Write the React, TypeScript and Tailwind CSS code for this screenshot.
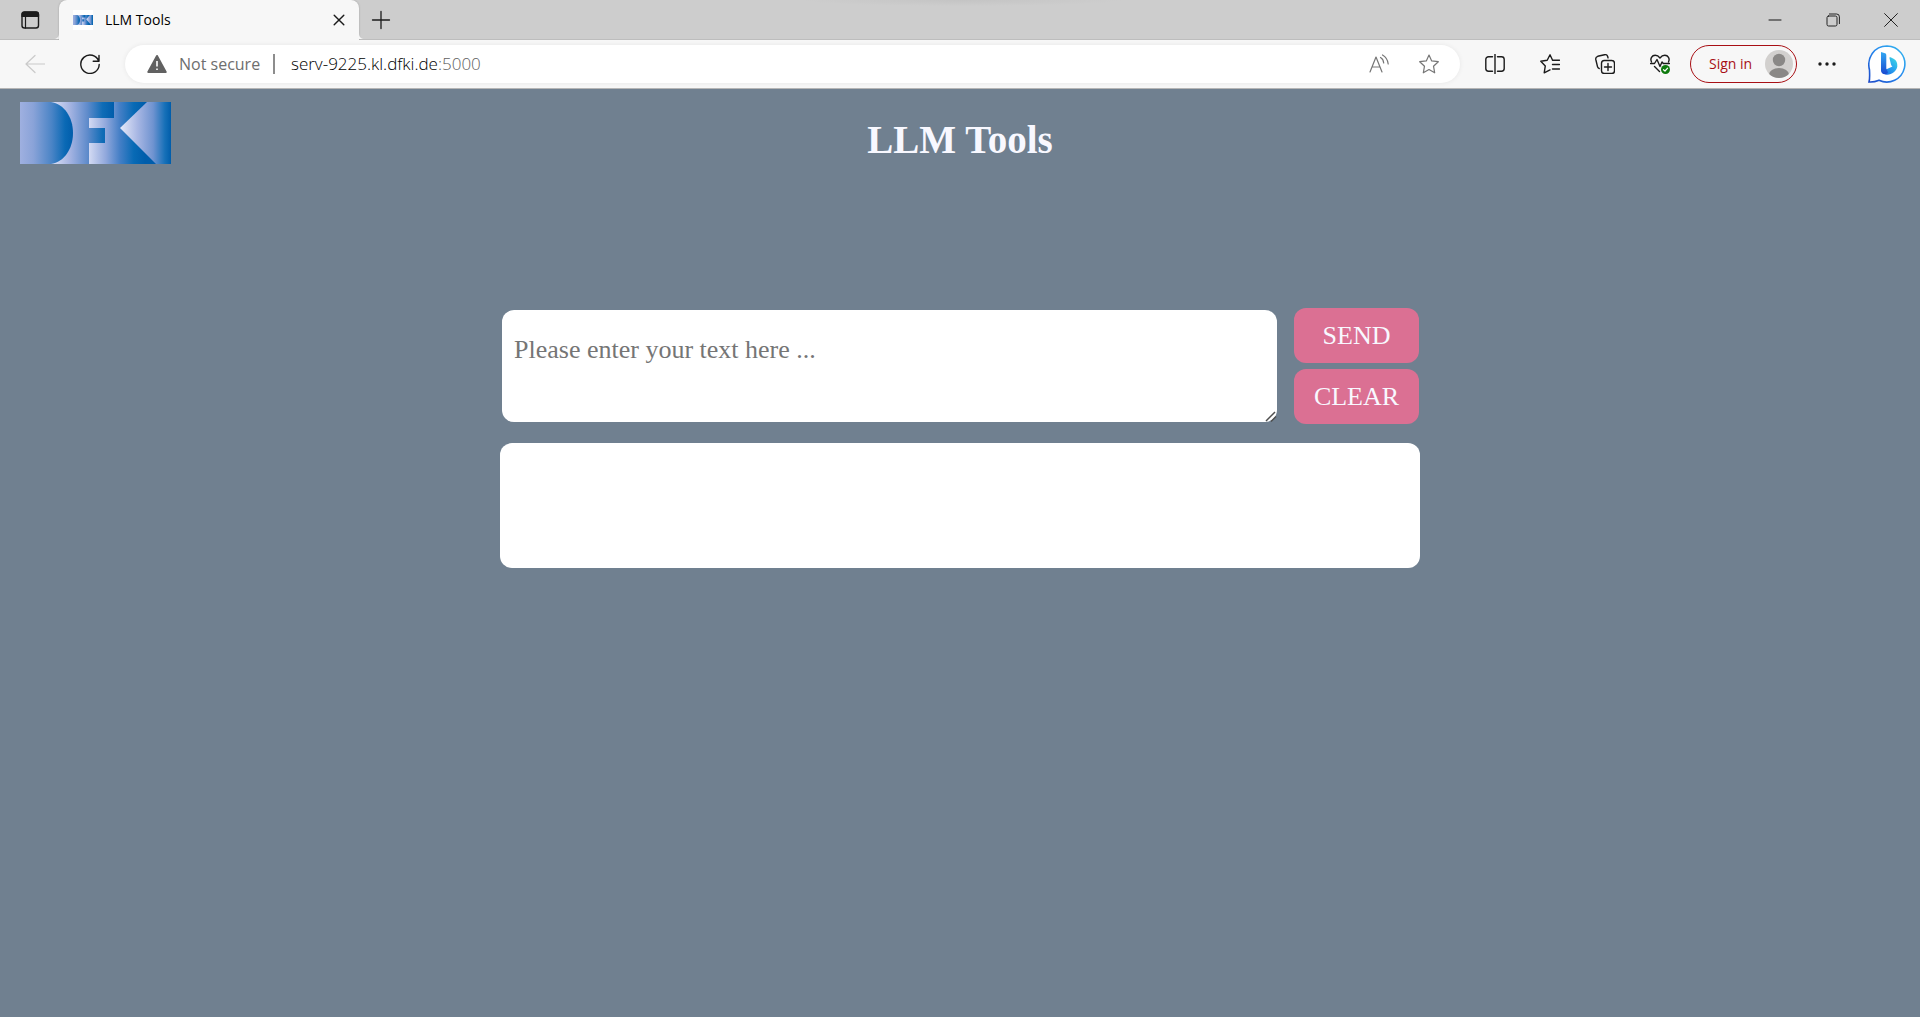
import { useState } from "react";
import type { ReactNode } from "react";

const uiFont = "font-['Open_Sans','Noto_Sans',sans-serif]";
const pageFont = "font-['Liberation_Serif',serif]";

function DfkiLogo({ className, id }: { className: string; id: string }) {
  return (
    <svg viewBox="0 0 151 62" preserveAspectRatio="none" className={className} role="img" aria-label="DFKI">
      <defs>
        <linearGradient id={id + "d"} gradientUnits="userSpaceOnUse" x1="0" y1="0" x2="53" y2="0">
          <stop offset="0" stopColor="#9fb0e0" />
          <stop offset="0.25" stopColor="#8aa3d8" />
          <stop offset="0.6" stopColor="#4a84c6" />
          <stop offset="0.85" stopColor="#0a69b5" />
          <stop offset="1" stopColor="#005dab" />
        </linearGradient>
        <linearGradient id={id + "f"} gradientUnits="userSpaceOnUse" x1="31" y1="0" x2="94" y2="0">
          <stop offset="0" stopColor="#dfe3f6" />
          <stop offset="0.3" stopColor="#a5b4e2" />
          <stop offset="0.58" stopColor="#5f8bcb" />
          <stop offset="0.82" stopColor="#0f6cb6" />
          <stop offset="1" stopColor="#005dab" />
        </linearGradient>
        <linearGradient id={id + "k"} gradientUnits="userSpaceOnUse" x1="69" y1="0" x2="125" y2="0">
          <stop offset="0" stopColor="#d3daf3" />
          <stop offset="0.3" stopColor="#91a8dc" />
          <stop offset="0.55" stopColor="#457fc6" />
          <stop offset="0.8" stopColor="#086ab5" />
          <stop offset="1" stopColor="#005dab" />
        </linearGradient>
        <linearGradient id={id + "t"} gradientUnits="userSpaceOnUse" x1="100" y1="0" x2="151" y2="0">
          <stop offset="0" stopColor="#e6eaf9" />
          <stop offset="0.35" stopColor="#a7b6e3" />
          <stop offset="0.65" stopColor="#6f93d0" />
          <stop offset="0.88" stopColor="#1670b8" />
          <stop offset="1" stopColor="#005dab" />
        </linearGradient>
      </defs>
      <path d="M69 0H151V62H69Z" fill={`url(#${id}k)`} />
      <path d="M30 0H94V16H69V26H85V41H69V62H30Z" fill={`url(#${id}f)`} />
      <path d="M0 0H31C44 2 53 15 53 31S44 60 31 62H0Z" fill={`url(#${id}d)`} />
      <path d="M127 0H151V62H136L100 26Z" fill={`url(#${id}t)`} />
    </svg>
  );
}

function Icon({ size = "size-5", children, color = "text-[#1b1b1b]" }: { size?: string; color?: string; children: ReactNode }) {
  return (
    <svg
      viewBox="0 0 20 20"
      className={`${size} ${color} shrink-0`}
      fill="none"
      stroke="currentColor"
      strokeWidth="1.2"
      strokeLinecap="round"
      strokeLinejoin="round"
      aria-hidden="true"
    >
      {children}
    </svg>
  );
}

function ToolButton({ label, children, disabled }: { label: string; children: ReactNode; disabled?: boolean }) {
  return (
    <button type="button" aria-label={label} disabled={disabled} className="flex h-full w-[55px] shrink-0 items-center justify-center">
      {children}
    </button>
  );
}

function TabCorner({ flip }: { flip?: boolean }) {
  return (
    <svg viewBox="0 0 6 6" className={`size-1.5 self-end ${flip ? "-scale-x-100" : ""}`} aria-hidden="true">
      <path d="M6 0V6H0C4 6 6 4 6 0Z" fill="#f7f7f7" />
    </svg>
  );
}

function TabStrip() {
  return (
    <div className="flex h-10 items-stretch border-b border-[#bdbdbd] bg-[#cdcdcd]">
      <button type="button" aria-label="Tab actions" className="ml-[7px] mr-px flex w-[45px] items-center justify-center">
        <Icon>
          <rect x="2" y="2" width="16.5" height="16" rx="2.5" strokeWidth="1.4" />
          <path d="M2 6.5V4.5A2.5 2.5 0 0 1 4.500 2H16a2.500 2.500 0 0 1 2.500 2.500V6.500Z" fill="currentColor" />
          <path d="M5.500 6.500V18" />
        </Icon>
      </button>
      <TabCorner />
      <div className="-mb-px flex w-[300px] items-center rounded-t-lg bg-[#f7f7f7] pl-3.5 pr-2 shadow-[0_0_2px_rgba(0,0,0,0.25)] [clip-path:inset(0_-2px_0_-2px)]">
        <span className="flex size-5 items-center bg-white">
          <DfkiLogo id="fav" className="h-2.5 w-5" />
        </span>
        <span className="ml-3 flex-1 text-sm text-black">LLM Tools</span>
        <button type="button" aria-label="Close tab" className="flex size-6 items-center justify-center">
          <Icon size="size-4">
            <path d="M4 4L16 16M16 4L4 16" strokeWidth="1.800" />
          </Icon>
        </button>
      </div>
      <TabCorner flip />
      <button type="button" aria-label="New tab" className="flex w-8 items-center justify-center">
        <Icon>
          <path d="M10 1.500V18.500M1.500 10H18.500" strokeWidth="1.300" />
        </Icon>
      </button>
      <div className="flex-1 bg-[radial-gradient(ellipse_160px_6px_at_565px_0px,#c4c4c4,#cdcdcd)]" />
      <button type="button" aria-label="Minimize" className="flex w-[58px] items-center justify-center">
        <Icon size="size-4">
          <path d="M2 10H18" strokeWidth="1.300" strokeLinecap="butt" />
        </Icon>
      </button>
      <button type="button" aria-label="Restore" className="flex w-[58px] items-center justify-center">
        <Icon size="size-4">
          <rect x="2.500" y="5" width="12.500" height="12.500" rx="2" />
          <path d="M5.500 2.500H14.500A3.500 3.500 0 0 1 18 6V14.500" />
        </Icon>
      </button>
      <button type="button" aria-label="Close window" className="flex w-[58px] items-center justify-center">
        <Icon size="size-4">
          <path d="M2 2L18 18M18 2L2 18" />
        </Icon>
      </button>
    </div>
  );
}

function Toolbar() {
  return (
    <div className="flex h-[49px] items-center border-b border-[#b5b5b5] bg-[#f7f7f7] pl-[7px] pr-[3px]">
      <ToolButton label="Back" disabled>
        <Icon color="text-[#cacaca]">
          <path d="M10 1.500L1 10L10 18.500M1 10H19.500" />
        </Icon>
      </ToolButton>
      <ToolButton label="Refresh">
        <Icon>
          <path d="M18.700 7.200A9.200 9.200 0 1 0 19.200 10.500M19 1.500V7.200H13.200" strokeWidth="1.400" />
        </Icon>
      </ToolButton>

      <div className="ml-2 flex h-[38px] min-w-0 flex-1 items-center rounded-full bg-white pl-[22px] pr-[21px] shadow-[0_0_5px_rgba(0,0,0,0.07)]">
        <svg viewBox="0 0 20 20" className="size-5 shrink-0" aria-hidden="true">
          <path d="M10 2L18.700 18H1.300Z" fill="#616161" stroke="#616161" strokeWidth="2" strokeLinejoin="round" />
          <path d="M10 7V12.500M10 14.500V16" stroke="#fff" strokeWidth="1.600" />
        </svg>
        <span className="ml-3 w-[82px] shrink-0 whitespace-nowrap text-base text-[#6e6e6e]">Not secure</span>
        <span className="ml-3 h-5 w-0.5 shrink-0 bg-[#8d8d8d]" />
        <a href="#" className="ml-4 min-w-0 flex-1 truncate text-[17px] font-light text-black">
          serv-9225.kl.dfki.de<span className="text-[#606060]">:5000</span>
        </a>
        <div className="flex gap-[30px]">
          <button type="button" aria-label="Read aloud">
            <Icon color="text-[#767676]">
              <path d="M1 18L7 3L13 18M3.200 13H10.800" />
              <path d="M11.500 3.500C13.500 4.500 14.500 6.500 14.700 9M13.500 1C17 3 18.800 6 19.200 10" />
            </Icon>
          </button>
          <button type="button" aria-label="Add to favorites">
            <Icon color="text-[#767676]">
              <path d="M10 1L12.700 6.900L19.300 7.700L14.500 12.200L15.700 18.800L10 15.600L4.300 18.800L5.500 12.200L0.700 7.700L7.300 6.900Z" />
            </Icon>
          </button>
        </div>
      </div>

      <div className="ml-[7px] flex h-full">
        <ToolButton label="Split screen">
          <Icon>
            <path d="M7.500 2.800H3.500A2.700 2.700 0 0 0 0.800 5.500V14.500A2.700 2.700 0 0 0 3.500 17.200H7.500M12.500 2.800H16.500A2.700 2.700 0 0 1 19.200 5.500V14.500A2.700 2.700 0 0 1 16.500 17.200H12.500" strokeWidth="1.400" />
            <path d="M10 0.500V19.500" strokeWidth="1.400" />
          </Icon>
        </ToolButton>
        <ToolButton label="Favorites">
          <Icon>
            <path d="M14 6.200H12.600L10 0.800L7.200 6.300L0.800 7.200L5.300 11.900L4.200 18.800L10 15.900M12.500 6.200H19.500M12.500 10.500H19.500M12.500 15H19.500" strokeWidth="1.400" />
          </Icon>
        </ToolButton>
        <ToolButton label="Collections">
          <Icon>
            <rect x="6.500" y="6.500" width="13" height="13" rx="2.800" strokeWidth="1.400" />
            <path d="M13 9.500V16.500M9.500 13H16.500" strokeWidth="1.400" />
            <path d="M4.200 14.500C3.200 14.300 2.700 13.700 2.500 12.700L0.800 5.500C0.500 4 1.200 2.800 2.700 2.300L9.500 0.700C11 0.400 12.200 1 12.700 2.500L13 3.800" strokeWidth="1.400" />
          </Icon>
        </ToolButton>
        <ToolButton label="Browser essentials">
          <Icon>
            <path d="M1.500 8C-0.200 4.500 2 1.300 5.200 1.300C7.200 1.300 8.700 2.300 10 4C11.300 2.300 12.800 1.300 14.800 1.300C18 1.300 20.200 4.500 18.500 8" strokeWidth="1.400" />
            <path d="M0.500 9.500H4.500L7 5.500L10 12.500L12 8L13.300 9.500H19.500M4.500 12.500L9.500 17.500" strokeWidth="1.400" />
            <circle cx="15.500" cy="15.500" r="4.500" fill="#0e7a0d" stroke="none" />
            <path d="M13.500 15.700L15 17L17.600 14.200" stroke="#fff" />
          </Icon>
        </ToolButton>
      </div>

      <button
        type="button"
        className="ml-[3px] flex h-[38px] w-[107px] shrink-0 items-center justify-between rounded-full border border-[#a80f14] pl-[18px] pr-[3px] text-sm text-[#a80f14]"
      >
        Sign in
        <svg viewBox="0 0 28 28" className="size-7" aria-hidden="true">
          <defs>
            <clipPath id="avatar">
              <circle cx="14" cy="14" r="14" />
            </clipPath>
          </defs>
          <circle cx="14" cy="14" r="14" fill="#d2d0ce" />
          <g fill="#8a8886" clipPath="url(#avatar)">
            <circle cx="14" cy="10" r="6.200" />
            <ellipse cx="14" cy="24.500" rx="10" ry="6.500" />
          </g>
        </svg>
      </button>
      <button type="button" aria-label="Settings and more" className="flex h-full w-[60px] shrink-0 items-center justify-center">
        <Icon>
          <g fill="currentColor" stroke="none">
            <circle cx="3" cy="10" r="1.700" />
            <circle cx="10" cy="10" r="1.700" />
            <circle cx="17" cy="10" r="1.700" />
          </g>
        </Icon>
      </button>
      <button type="button" aria-label="Bing chat" className="flex h-full w-[60px] shrink-0 items-center justify-center">
        <svg viewBox="0 0 38 38" className="size-[38px]" aria-hidden="true">
          <defs>
            <linearGradient id="ring" x1="0" y1="1" x2="1" y2="0">
              <stop offset="0" stopColor="#1b48c8" />
              <stop offset="0.5" stopColor="#2687ee" />
              <stop offset="1" stopColor="#35b9ee" />
            </linearGradient>
            <linearGradient id="stem" x1="0" y1="0" x2="0" y2="1">
              <stop offset="0" stopColor="#32a8f3" />
              <stop offset="1" stopColor="#1949cf" />
            </linearGradient>
            <linearGradient id="bowl" x1="0" y1="1" x2="1" y2="0">
              <stop offset="0" stopColor="#1b62e0" />
              <stop offset="0.550" stopColor="#28a5f0" />
              <stop offset="1" stopColor="#42e0e0" />
            </linearGradient>
          </defs>
          <path d="M19 1A18 18 0 1 1 11 35.200C8 36.500 4.500 37.300 1 37C1.800 34.500 1.800 31 1.500 25C-1.500 13 6 1 19 1Z" fill="#fff" stroke="url(#ring)" strokeWidth="1.600" />
          <path d="M21.500 13.200C21.200 12.400 21.800 12 22.600 12.300L26 14C28.500 15.500 29.500 18 29.300 21.500C28.800 26.500 22 31 17.500 29.500L13.500 26.500L24.500 21.500C22.800 20.700 22.600 17 21.500 13.200Z" fill="url(#bowl)" />
          <path d="M13 7L17 8.200C18 8.600 18.300 9.400 18.300 10.400V23.500L20 27.500C18 30.500 13 29.500 13 25.500Z" fill="url(#stem)" />
        </svg>
      </button>
    </div>
  );
}

function LlmTools() {
  const [text, setText] = useState("");
  const buttonClass = "h-[55px] w-full rounded-xl bg-[#db7093] text-[26px] leading-none text-[#f8f8ff]";
  return (
    <main className={`flex-1 bg-[#708090] ${pageFont}`}>
      <header className="grid grid-cols-[1fr_auto_1fr] items-start px-5 pt-[13px]">
        <DfkiLogo id="logo" className="h-[62px] w-[151px]" />
        <h1 className="pt-[15px] text-[39px] leading-[46px] font-bold text-[#f8f8ff]">LLM Tools</h1>
      </header>
      <section className="mx-auto mt-36 w-full max-w-[920px]">
        <form className="flex items-center gap-[17px] pl-0.5 pr-px" onSubmit={(e) => e.preventDefault()}>
          <div className="relative min-w-0 flex-1">
            <textarea
              aria-label="Text"
              value={text}
              onChange={(e) => setText(e.target.value)}
              placeholder="Please enter your text here ..."
              className="block h-28 w-full rounded-xl bg-white px-3 py-6 text-[26px] leading-8 text-black placeholder:text-[#757575] [&::-webkit-resizer]:bg-transparent"
            />
            <svg viewBox="0 0 12 12" className="pointer-events-none absolute bottom-0 right-0 size-3" aria-hidden="true">
              <path d="M1 11L10 2M6 11.500L11 6.500" stroke="#4f4f4f" strokeWidth="1.500" />
            </svg>
          </div>
          <div className="flex w-[125px] flex-col gap-1.5">
            <button type="submit" className={buttonClass}>SEND</button>
            <button type="button" className={buttonClass} onClick={() => setText("")}>CLEAR</button>
          </div>
        </form>
        <output className="mt-[19px] block min-h-[125px] rounded-xl bg-white" />
      </section>
    </main>
  );
}

export default function App() {
  return (
    <div className={`flex min-h-screen flex-col bg-[#708090] ${uiFont}`}>
      <TabStrip />
      <Toolbar />
      <LlmTools />
    </div>
  );
}
